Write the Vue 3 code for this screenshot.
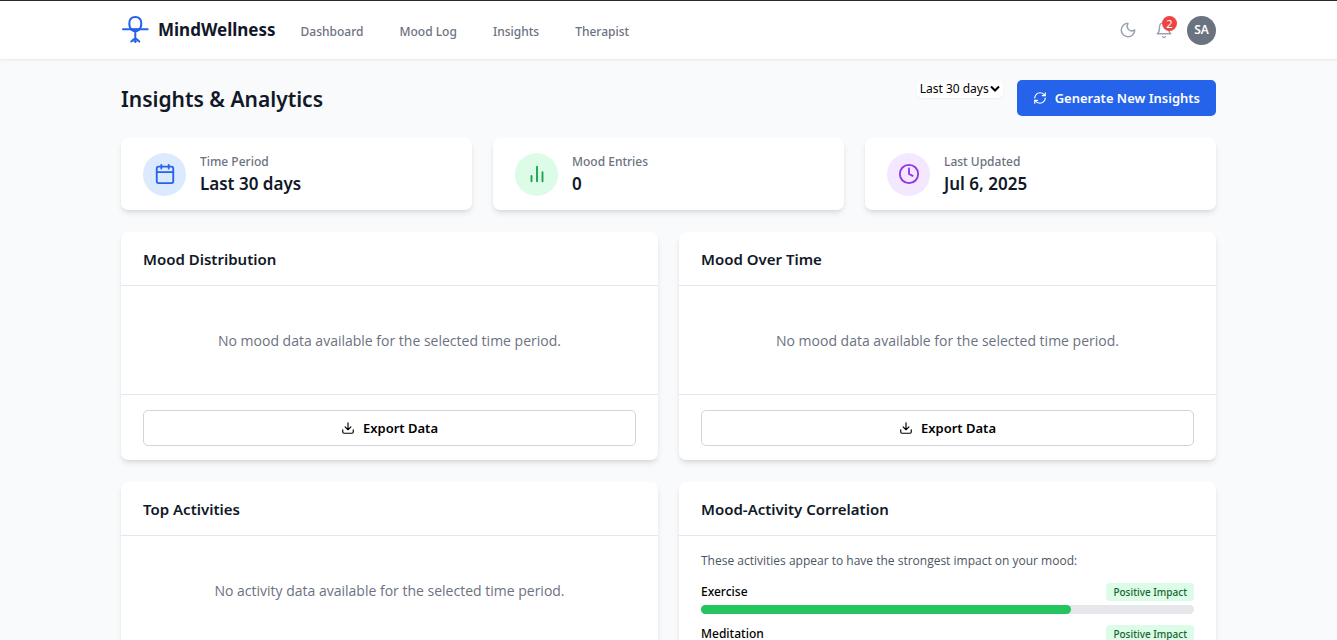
<script setup>
import { ref } from 'vue'

const period = ref('Last 30 days')
const links = ['Dashboard', 'Mood Log', 'Insights', 'Therapist']
const stats = [
  { label: 'Time Period', value: 'Last 30 days', tone: 'blue', icon: 'calendar' },
  { label: 'Mood Entries', value: '0', tone: 'green', icon: 'bars' },
  { label: 'Last Updated', value: 'Jul 6, 2025', tone: 'purple', icon: 'clock' },
]
const charts = ['Mood Distribution', 'Mood Over Time']
const correlations = [
  { name: 'Exercise', percent: 75 },
  { name: 'Meditation', percent: 65 },
]
</script>

<template>
  <div class="page">
    <header class="topbar">
      <div class="container bar">
        <a class="brand" href="#">
          <svg class="brand-icon" viewBox="0 0 28 28" fill="none" stroke="currentColor" stroke-width="2" stroke-linecap="round" stroke-linejoin="round">
            <path d="M8.300 7.500c0-4 2.300-6.500 6-6.500s6 2.500 6 6.500c0 3-.8 5-2.500 6.500-1.800 1.500-5.200 1.500-7 0-1.700-1.500-2.500-3.500-2.500-6.500Z" />
            <path d="M2 13.300h24.700M14.300 15.500v10.500M14.300 22l-4 3.600M14.300 22l4 3.600" />
            <path d="M11 13.300h6.600l-1.600 1.700h-3.400Z" stroke-width="1.500" />
            <path d="M12.800 25.300h3" stroke-width="1" />
          </svg>
          <span>MindWellness</span>
        </a>
        <nav class="nav">
          <a v-for="link in links" :key="link" href="#">{{ link }}</a>
        </nav>
        <div class="tools">
          <button class="tool" type="button" aria-label="Toggle dark mode">
            <svg viewBox="0 0 24 24" fill="none" stroke="currentColor" stroke-width="2" stroke-linecap="round" stroke-linejoin="round">
              <path d="M20.985 12.486a9 9 0 1 1-9.473-9.472c.405-.022.617.46.402.803a6 6 0 0 0 8.268 8.268c.344-.215.825-.004.803.401" />
            </svg>
          </button>
          <button class="tool" type="button" aria-label="Notifications">
            <svg viewBox="0 0 24 24" fill="none" stroke="currentColor" stroke-width="2" stroke-linecap="round" stroke-linejoin="round">
              <path d="M6 8a6 6 0 0 1 12 0c0 7 3 9 3 9H3s3-2 3-9" />
              <path d="M10.300 21a1.940 1.940 0 0 0 3.400 0" />
            </svg>
            <span class="badge">2</span>
          </button>
          <button class="avatar" type="button">SA</button>
        </div>
      </div>
    </header>

    <main class="container content">
      <div class="heading">
        <h1>Insights &amp; Analytics</h1>
        <div class="actions">
          <div class="select-wrap">
            <select v-model="period" aria-label="Time period">
              <option>Last 7 days</option>
              <option>Last 30 days</option>
              <option>Last 90 days</option>
            </select>
            <svg class="caret" viewBox="0 0 10 8" fill="none" stroke="currentColor" stroke-width="2">
              <path d="M1 1.500l4 4 4-4" />
            </svg>
          </div>
          <button class="primary" type="button">
            <svg class="small-icon" viewBox="0 0 24 24" fill="none" stroke="currentColor" stroke-width="2" stroke-linecap="round" stroke-linejoin="round">
              <path d="M3 12a9 9 0 0 1 9-9 9.750 9.750 0 0 1 6.740 2.740L21 8" />
              <path d="M21 3v5h-5" />
              <path d="M21 12a9 9 0 0 1-9 9 9.750 9.750 0 0 1-6.740-2.740L3 16" />
              <path d="M8 16H3v5" />
            </svg>
            Generate New Insights
          </button>
        </div>
      </div>

      <section class="stats">
        <article v-for="s in stats" :key="s.label" class="card stat">
          <div class="disc" :class="s.tone">
            <svg viewBox="0 0 24 24" fill="none" stroke="currentColor" stroke-width="2" stroke-linecap="round" stroke-linejoin="round">
              <template v-if="s.icon === 'calendar'">
                <rect x="3" y="4" width="18" height="18" rx="2" />
                <path d="M8 2v4M16 2v4M3 10h18" />
              </template>
              <path v-else-if="s.icon === 'bars'" d="M6 20v-6M12 20V4M18 20V10" />
              <template v-else>
                <circle cx="12" cy="12" r="10" />
                <path d="M12 6v6l4 2" />
              </template>
            </svg>
          </div>
          <div>
            <p class="stat-label">{{ s.label }}</p>
            <p class="stat-value">{{ s.value }}</p>
          </div>
        </article>
      </section>

      <section class="panels">
        <article v-for="title in charts" :key="title" class="card">
          <h2>{{ title }}</h2>
          <p class="empty">No mood data available for the selected time period.</p>
          <footer>
            <button class="export" type="button">
              <svg class="small-icon" viewBox="0 0 24 24" fill="none" stroke="currentColor" stroke-width="2" stroke-linecap="round" stroke-linejoin="round">
                <path d="M21 15v4a2 2 0 0 1-2 2H5a2 2 0 0 1-2-2v-4" />
                <path d="M7 10l5 5 5-5M12 15V3" />
              </svg>
              Export Data
            </button>
          </footer>
        </article>

        <article class="card">
          <h2>Top Activities</h2>
          <p class="empty">No activity data available for the selected time period.</p>
        </article>

        <article class="card">
          <h2>Mood-Activity Correlation</h2>
          <div class="impact">
            <p>These activities appear to have the strongest impact on your mood:</p>
            <div v-for="c in correlations" :key="c.name" class="activity">
              <div class="activity-head">
                <span class="activity-name">{{ c.name }}</span>
                <span class="tag">Positive Impact</span>
              </div>
              <div class="track">
                <div class="fill" :style="{ width: c.percent + '%' }"></div>
              </div>
            </div>
          </div>
        </article>
      </section>
    </main>
  </div>
</template>

<style>
body {
  background: #f9fafb;
}
</style>

<style scoped>
.page {
  height: 100vh;
  overflow: hidden;
  background: #f9fafb;
  color: #111827;
  font-family: "Noto Sans", "Open Sans", sans-serif;
  font-size: 13px;
  line-height: 18px;
}
h1, h2, p {
  margin: 0;
}
a {
  color: inherit;
  text-decoration: none;
}
button, select {
  margin: 0;
  border: 0;
  font: inherit;
  cursor: pointer;
}
.container {
  box-sizing: border-box;
  max-width: 1151px;
  margin: 0 auto;
  padding: 0 28px;
}
.topbar {
  border-top: 1px solid #2b2a2d;
  background: #fff;
  box-shadow: 0 1px 2px rgba(0, 0, 0, 0.08);
}
.bar {
  display: flex;
  align-items: center;
  height: 58px;
}
.brand {
  display: flex;
  align-items: center;
  gap: 9px;
  font-size: 17px;
  font-weight: 700;
}
.brand-icon {
  width: 28px;
  height: 28px;
  color: #2563eb;
}
.nav {
  display: flex;
  gap: 36px;
  margin-left: 25px;
  padding-top: 3px;
  color: #6b7280;
  font-size: 12px;
  font-weight: 500;
}
.tools {
  display: flex;
  align-items: center;
  gap: 14px;
  margin-left: auto;
}
.tool {
  position: relative;
  display: flex;
  padding: 2px;
  background: none;
  color: #9ca3af;
}
.tool:nth-child(2) {
  margin-right: -2px;
}
.tool svg {
  width: 18px;
  height: 18px;
}
.badge {
  position: absolute;
  top: -3px;
  right: -2px;
  width: 15px;
  height: 15px;
  border-radius: 50%;
  background: #ef4444;
  color: #fff;
  font-size: 11px;
  line-height: 15px;
  text-align: center;
}
.avatar {
  width: 29px;
  height: 29px;
  padding: 0;
  border-radius: 50%;
  background: #6b7280;
  color: #fff;
  font-size: 12px;
  font-weight: 600;
}
.content {
  padding-top: 21px;
}
.heading {
  display: flex;
  align-items: center;
  justify-content: space-between;
  margin-bottom: 22px;
}
h1 {
  padding-top: 2px;
  font-size: 21px;
  line-height: 28px;
  font-weight: 600;
}
.actions {
  display: flex;
  align-items: flex-start;
  gap: 14px;
}
.select-wrap {
  position: relative;
}
select {
  display: block;
  appearance: none;
  height: 18px;
  padding: 0 13px 0 3px;
  border-radius: 5px;
  background: #fff;
  box-shadow: 0 1px 2px rgba(0, 0, 0, 0.05);
  color: #000;
  font-size: 12px;
  line-height: 18px;
}
.caret {
  position: absolute;
  top: 5px;
  right: 3px;
  width: 10px;
  height: 8px;
  color: #000;
  pointer-events: none;
}
.primary, .export {
  display: flex;
  align-items: center;
  justify-content: center;
  gap: 8px;
  height: 36px;
  padding: 0 16px;
  border-radius: 5px;
  font-size: 13px;
  font-weight: 600;
}
.primary {
  background: #2563eb;
  color: #fff;
}
.small-icon {
  width: 14px;
  height: 14px;
}
.card {
  border-radius: 7px;
  background: #fff;
  box-shadow: 0 4px 6px -1px rgba(0, 0, 0, 0.1), 0 2px 4px -2px rgba(0, 0, 0, 0.1);
}
.stats {
  display: grid;
  grid-template-columns: repeat(3, 1fr);
  gap: 21px;
  margin-bottom: 22px;
}
.stat {
  display: flex;
  align-items: center;
  gap: 14px;
  padding: 14px 22px;
}
.disc {
  display: flex;
  align-items: center;
  justify-content: center;
  width: 43px;
  height: 43px;
  border-radius: 50%;
}
.disc svg {
  width: 22px;
  height: 22px;
}
.blue {
  background: #dbeafe;
  color: #2563eb;
}
.green {
  background: #dcfce7;
  color: #16a34a;
}
.purple {
  background: #f3e8ff;
  color: #9333ea;
}
.stat-label {
  padding-top: 1px;
  color: #6b7280;
  font-size: 12px;
  font-weight: 500;
}
.stat-value {
  font-size: 17px;
  line-height: 25px;
  font-weight: 600;
}
.panels {
  display: grid;
  grid-template-columns: repeat(2, 1fr);
  gap: 22px 21px;
}
h2 {
  padding: 16px 22px 15px;
  border-bottom: 1px solid #e5e7eb;
  font-size: 15px;
  line-height: 22px;
  font-weight: 600;
}
.empty {
  padding: 46px 22px 44px;
  color: #6b7280;
  font-family: "Open Sans", "Noto Sans", sans-serif;
  font-size: 14px;
  text-align: center;
}
footer {
  padding: 15px 22px 14px;
  border-top: 1px solid #e5e7eb;
}
.export {
  width: 100%;
  border: 1px solid #d1d5db;
  background: #fff;
  color: #000;
}
.impact {
  padding: 16px 22px 22px;
}
.impact p {
  margin-bottom: 13px;
  color: #4b5563;
  font-family: "Open Sans", "Noto Sans", sans-serif;
  font-size: 12px;
}
.activity {
  margin-bottom: 11px;
}
.activity-head {
  display: flex;
  align-items: center;
  justify-content: space-between;
  margin-bottom: 4px;
}
.activity-name {
  color: #000;
  font-size: 12px;
  font-weight: 500;
}
.tag {
  padding: 0 7px;
  border-radius: 4px;
  background: #dcfce7;
  color: #166534;
  font-size: 10px;
  font-weight: 500;
}
.track {
  height: 9px;
  border-radius: 5px;
  background: #e5e7eb;
}
.fill {
  height: 100%;
  border-radius: 5px;
  background: #22c55e;
}
</style>
